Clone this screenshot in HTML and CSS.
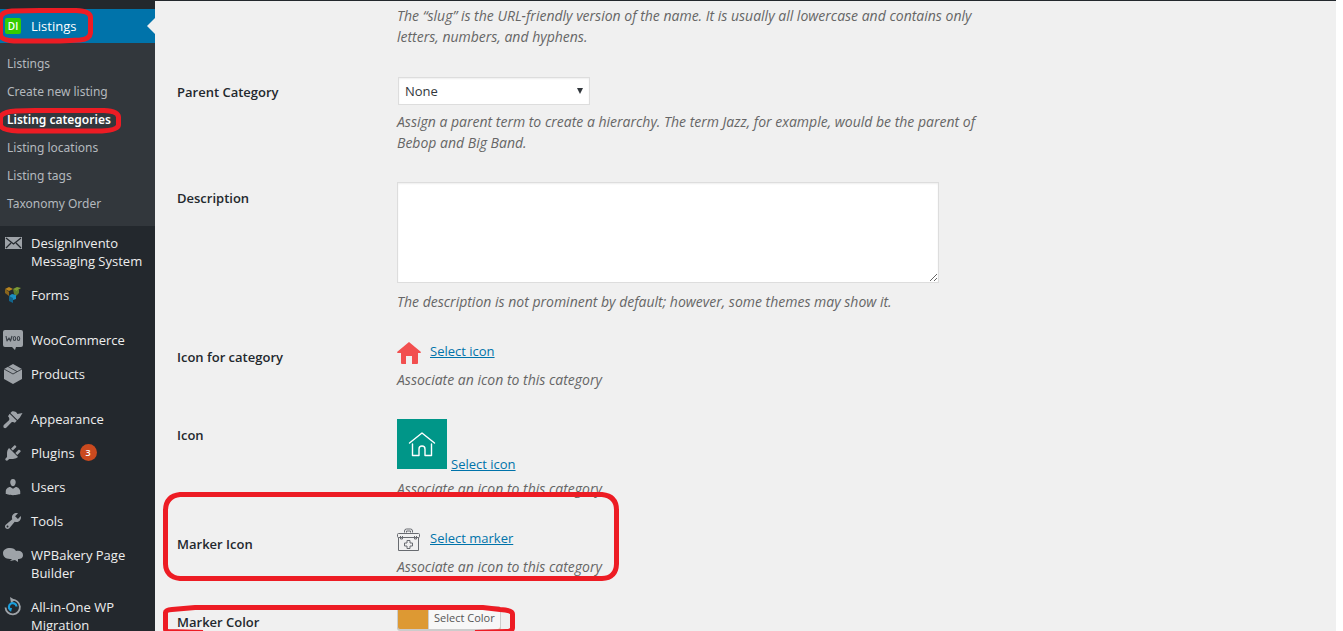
FILE: index.html
```html
<!DOCTYPE html>
<html lang="en">
<head>
<meta charset="utf-8">
<title>Listing categories</title>
<link rel="stylesheet" href="styles.css">
</head>
<body>
<div class="page">
  <div class="adminbar"></div>
  <nav class="sidebar" aria-label="Admin menu">
    <a class="item current" href="#"><span class="badge-di">DI</span><span>Listings</span></a>
    <ul class="submenu">
      <li><a href="#">Listings</a></li>
      <li><a href="#">Create new listing</a></li>
      <li><a class="active" href="#">Listing categories</a></li>
      <li><a href="#">Listing locations</a></li>
      <li><a href="#">Listing tags</a></li>
      <li><a href="#">Taxonomy Order</a></li>
    </ul>
    <a class="item" href="#">
      <svg class="icon" viewBox="0 0 20 20"><path fill="#9ea3a8" d="M2 4h17v12H2z"/><path fill="none" stroke="#23282d" stroke-width="1.3" d="M3 5l7.500 6L18 5M3 15l5-5M18 15l-5-5"/></svg>
      <span>DesignInvento Messaging System</span></a>
    <a class="item" href="#">
      <svg class="icon" viewBox="0 0 20 20"><path fill="#b9851f" d="M2 4l4-2 4 2-2 1-2 1z"/><path fill="#8a651c" d="M2 4l3 2 1 1v4L2 8z"/><path fill="#7d9b35" d="M10 4l4-2 4 1-3 2-1 2z"/><path fill="#5d7b2b" d="M10 4l4 2 2-2v4l-3 3-2-2z"/><path fill="#1c8fc0" d="M6 11l3-2 4 1v4l-3 1z"/><path fill="#12658c" d="M6 11l4 2v5l-4-2z"/></svg>
      <span>Forms</span></a>
    <a class="item spaced" href="#">
      <svg class="icon" viewBox="0 0 20 20"><path fill="#9ea3a8" d="M2 0h16q2 0 2 2v13q0 2-2 2h-5l-1 3-3-3H2q-2 0-2-2V2q0-2 2-2z"/><path fill="none" stroke="#3c4249" stroke-width="1.2" stroke-linejoin="round" d="M3 6l1 5 2-3 1.500 3L9 6"/><ellipse cx="11.500" cy="8.500" rx="1.200" ry="2" fill="none" stroke="#3c4249" stroke-width="1.100"/><ellipse cx="15.500" cy="8.500" rx="1.200" ry="2" fill="none" stroke="#3c4249" stroke-width="1.100"/></svg>
      <span>WooCommerce</span></a>
    <a class="item" href="#">
      <svg class="icon" viewBox="0 0 20 20"><path fill="#9ea3a8" d="M10 0l9 5v10l-9 5-9-5V5z"/><path fill="none" stroke="#23282d" stroke-width=".8" d="M1 5l9 5 9-5M5 2.500l9 5"/></svg>
      <span>Products</span></a>
    <a class="item spaced" href="#">
      <svg class="icon" viewBox="0 0 20 20"><path fill="#9ea3a8" d="M14.480 11.060L7.410 3.990l1.500-1.500c.5-.56 2.300-.47 3.510.32 1.210.8 1.430 1.280 2 2.100l5.080-1-2.600 4.600zM6.700 4.700l7.070 7.070-1.950 1.940c-1-.8-2.500-1.200-3.500-.3L3.500 18.600c-2 1.600-4-.5-2.700-2.500L6 11.200c.8-1.300.2-2.600-1-3.900z"/></svg>
      <span>Appearance</span></a>
    <a class="item" href="#">
      <svg class="icon" viewBox="0 0 20 20"><path fill="#9ea3a8" d="M13.110 4.360L9.870 7.600 8 5.730l3.240-3.240c.35-.34 1.050-.2 1.560.32.52.51.66 1.210.31 1.550zm-8 1.770l.91-1.120 9.010 9.010-1.190.84c-.71.71-2.630 1.160-3.820 1.160H6.140L4.900 17.260c-.59.59-1.540.59-2.120 0-.59-.58-.59-1.530 0-2.120l1.240-1.240v-3.880c0-1.130.4-3.190 1.090-3.890zm7.260 3.970l3.240-3.240c.34-.35 1.040-.21 1.550.31.52.51.66 1.210.31 1.550l-3.240 3.250z"/></svg>
      <span>Plugins</span><span class="count">3</span></a>
    <a class="item" href="#">
      <svg class="icon" viewBox="0 0 20 20"><path fill="#9ea3a8" d="M10 9.250c-2.270 0-2.730-3.440-2.730-3.440C7 4.020 7.820 2 9.970 2c2.160 0 2.980 2.020 2.710 3.810 0 0-.41 3.440-2.680 3.440zm0 2.570L12.720 10c2.390 0 4.520 2.330 4.520 4.530v2.490s-3.650 1.130-7.240 1.130c-3.650 0-7.240-1.130-7.240-1.130v-2.490c0-2.250 1.940-4.480 4.470-4.480z"/></svg>
      <span>Users</span></a>
    <a class="item" href="#">
      <svg class="icon" viewBox="0 0 20 20"><path fill="#9ea3a8" d="M16.680 9.770c-1.340 1.340-3.300 1.670-4.950.99l-5.410 6.520c-.99.990-2.590.990-3.580 0s-.99-2.590 0-3.570l6.520-5.420c-.68-1.650-.35-3.610.99-4.950 1.280-1.280 3.120-1.620 4.720-1.060l-2.890 2.890 2.820 2.820 2.860-2.870c.53 1.580.18 3.390-1.080 4.650zM3.810 16.210c.4.390 1.040.390 1.430 0 .4-.4.400-1.040 0-1.430-.39-.4-1.030-.4-1.430 0-.39.390-.39 1.030 0 1.430z"/></svg>
      <span>Tools</span></a>
    <a class="item" href="#">
      <svg class="icon" viewBox="0 0 20 20"><path fill="#9ea3a8" d="M7 3c3 0 5 1 6 3 4-1 7 1 7 4s-2 4-5 4v3l-3-2-5 1 2-2c-5 0-9-1-9-6 0-3 3-5 7-5z"/></svg>
      <span>WPBakery Page Builder</span></a>
    <a class="item" href="#">
      <svg class="icon" viewBox="0 0 20 20"><path fill="none" stroke="#9ea3a8" stroke-width="1.800" d="M9 3a7.200 7.200 0 1 1-6.500 7.500"/><path fill="#9ea3a8" d="M7 0l5 3-4 3z"/><path fill="none" stroke="#1b9fdd" stroke-width="2.200" d="M7.500 13a3.800 3.800 0 1 1 6-3.500"/><path fill="#1b9fdd" d="M5 11h4l-1 4z"/></svg>
      <span>All-in-One WP Migration</span></a>
  </nav>

  <main class="content">
    <form class="form">
      <div class="row">
        <span></span>
        <div class="field"><p class="hint">The “slug” is the URL-friendly version of the name. It is usually all lowercase and contains only letters, numbers, and hyphens.</p></div>
      </div>
      <div class="row">
        <label class="label" for="parent">Parent Category</label>
        <div class="field">
          <div class="select-wrap"><select id="parent" class="select"><option>None</option></select></div>
          <p class="hint">Assign a parent term to create a hierarchy. The term Jazz, for example, would be the parent of Bebop and Big Band.</p>
        </div>
      </div>
      <div class="row">
        <label class="label" for="description">Description</label>
        <div class="field">
          <textarea id="description" class="textarea"></textarea>
          <p class="hint">The description is not prominent by default; however, some themes may show it.</p>
        </div>
      </div>
      <div class="row">
        <span class="label">Icon for category</span>
        <div class="field">
          <div class="picker">
            <svg class="glyph" viewBox="0 0 24 24"><path fill="#f24f4f" d="M12 1l12 10q0 1-1 1h-2v10q0 1-1 1h-5v-8H9v8H5q-1 0-1-1V12H1q-1 0-1-1z"/></svg>
            <a href="#">Select icon</a>
          </div>
          <p class="hint">Associate an icon to this category</p>
        </div>
      </div>
      <div class="row">
        <span class="label">Icon</span>
        <div class="field">
          <div class="picker tile-picker">
            <svg class="tile" viewBox="0 0 50 50"><path fill="#009688" d="M0 0h50v50H0z"/><path fill="none" stroke="#fff" stroke-width="1.400" stroke-linecap="round" stroke-linejoin="round" d="M12.500 24L25 14l12.500 10M15.500 25v11.500h6.500V30q0-3 3-3t3 3v6.500h6.500V25"/></svg>
            <a href="#">Select icon</a>
          </div>
          <p class="hint">Associate an icon to this category</p>
        </div>
      </div>
      <div class="row">
        <span class="label">Marker Icon</span>
        <div class="field">
          <div class="picker">
            <svg class="glyph" viewBox="0 0 24 24"><g fill="none" stroke="#686b70" stroke-width="1"><path d="M7.500 4.500V3q0-2 2-2h4q2 0 2 2v1.500M9.500 4.500V3h4v1.500"/><rect x=".5" y="5.500" width="22" height="4" rx="1"/><path d="M1.500 9.500v13h20v-13M3.500 8v3h2V8M17.500 8v3h2V8M10 12.500h3v2.500h2.500v3H13v2.500h-3V18H7.500v-3H10z"/></g></svg>
            <a href="#">Select marker</a>
          </div>
          <p class="hint">Associate an icon to this category</p>
        </div>
      </div>
      <div class="row">
        <span class="label">Marker Color</span>
        <div class="field"><button type="button" class="color"><span class="swatch"></span><span class="color-text">Select Color</span></button></div>
      </div>
    </form>
  </main>

  <svg class="marks" width="640" height="640" viewBox="0 0 640 640" aria-hidden="true">
    <path d="M12 11L40 10.500H76Q90 11 90.500 17V33Q90 39 80 40L60 41H14Q1 40 .5 35V18Q1 12 12 11z"/>
    <path d="M16 111L35 110.500H104Q118 111 118.500 117V125Q118 130 102 131H18Q1 130 .5 125V117Q2 112 16 111z"/>
    <path d="M180 494.500H602Q616.500 496 616.500 510V564Q616 578 602 578.500H180Q166 577 165.500 564V510Q166 496 180 494.500z"/>
    <path d="M203 632.500L168 631.500Q165.500 631 165.500 629V613Q165 610 172 609.500L195 607.500H483L500 609.500Q512.500 610 512.500 614V628Q512 631.500 506 631.500L475 632.500"/>
  </svg>
</div>
</body>
</html>
```
FILE: styles.css
```css
* {
  box-sizing: border-box;
}

body {
  margin: 0;
  background: #fff;
  color: #23282d;
  font: 13px/18px "Open Sans", "Noto Sans", sans-serif;
}

.page {
  position: relative;
  display: grid;
  grid-template-columns: 155px 1fr;
  grid-template-rows: 1px 1fr;
  height: 100vh;
  margin-right: 7px;
  overflow: hidden;
  background: #f0f0f0;
}

.adminbar {
  grid-column: 1 / -1;
  background: #23282d;
}

.sidebar {
  display: flex;
  flex-direction: column;
  padding-top: 8px;
  overflow: hidden;
  background: #23282d;
}

.item {
  position: relative;
  display: flex;
  flex-shrink: 0;
  gap: 8px;
  padding: 8px 6px 8px 3px;
  color: #eee;
  text-decoration: none;
}

.item.spaced {
  margin-top: 11px;
}

.icon {
  flex: none;
  width: 20px;
  height: 20px;
  margin: -1px 0;
}

.item.current {
  gap: 10px;
  padding-left: 5px;
  background: #0073aa;
  color: #fff;
}

.item.current::after {
  content: "";
  position: absolute;
  top: 9px;
  right: 0;
  border: 8px solid transparent;
  border-left: 0;
  border-right-color: #f0f0f0;
}

.badge-di {
  width: 16px;
  height: 16px;
  margin-top: 1px;
  border-radius: 2px;
  background: #3c0;
  font-size: 10px;
  font-weight: 600;
  line-height: 16px;
  text-align: center;
}

.count {
  width: 17px;
  height: 17px;
  margin-left: -3px;
  border-radius: 50%;
  background: #ca4a1f;
  color: #fff;
  font-size: 9px;
  font-weight: 600;
  line-height: 17px;
  text-align: center;
}

.submenu {
  flex-shrink: 0;
  margin: 0;
  padding: 7px 0 8px;
  background: #32373c;
  font-family: "Noto Sans", "Open Sans", sans-serif;
  font-size: 12px;
  list-style: none;
}

.submenu a {
  display: block;
  padding: 5px 7px;
  color: #b4b9be;
  text-decoration: none;
}

.submenu .active {
  color: #fff;
  font-weight: 600;
}

.content {
  padding: 4px 22px;
  overflow: hidden;
}

.form {
  display: flex;
  flex-direction: column;
  gap: 29px;
}

.row {
  display: grid;
  grid-template-columns: 220px minmax(0, 580px);
}

.label {
  padding-top: 7px;
  font-weight: 600;
}

.hint {
  margin: 0;
  color: #666;
  font-size: 14px;
  font-style: italic;
  line-height: 21px;
}

.select-wrap {
  position: relative;
  width: 192px;
  margin: 1px 0 6px 1px;
}

.select-wrap::after {
  content: "";
  position: absolute;
  top: 11px;
  right: 7px;
  border: 3px solid transparent;
  border-top: 6px solid #32373c;
  border-bottom: 0;
  pointer-events: none;
}

.select {
  display: block;
  width: 100%;
  height: 28px;
  padding: 0 6px;
  border: 1px solid #ddd;
  border-radius: 0;
  appearance: none;
  background: #fff;
  box-shadow: inset 0 1px 2px rgba(0, 0, 0, 0.07);
  color: #32373c;
  font: inherit;
}

.textarea {
  display: block;
  width: 100%;
  max-width: 542px;
  height: 101px;
  margin-bottom: 8px;
  border: 1px solid #ddd;
  background: #fff;
  box-shadow: inset 0 1px 2px rgba(0, 0, 0, 0.07);
  font: inherit;
}

.picker {
  display: flex;
  gap: 9px;
  height: 28px;
}

.picker a {
  height: 20px;
  color: #0073aa;
  line-height: 20px;
}

.glyph {
  width: 24px;
  height: 24px;
}

.tile-picker {
  gap: 4px;
  align-items: flex-end;
  height: 59px;
  padding-bottom: 4px;
}

.tile {
  align-self: flex-start;
  width: 50px;
  height: 50px;
}

.color {
  display: flex;
  height: 24px;
  padding: 0;
  border: 1px solid #ccc;
  border-radius: 3px;
  background: #dd9933;
  box-shadow: 0 1px 0 #ccc;
  overflow: hidden;
  font: 11px/22px "Open Sans", "Noto Sans", sans-serif;
}

.swatch {
  width: 30px;
}

.color-text {
  padding: 0 5px;
  border-left: 1px solid #ccc;
  background: #f7f7f7;
  color: #555;
}

.marks {
  position: absolute;
  top: 0;
  left: 0;
  fill: none;
  stroke: #ed1c24;
  stroke-width: 5;
  pointer-events: none;
}
```
